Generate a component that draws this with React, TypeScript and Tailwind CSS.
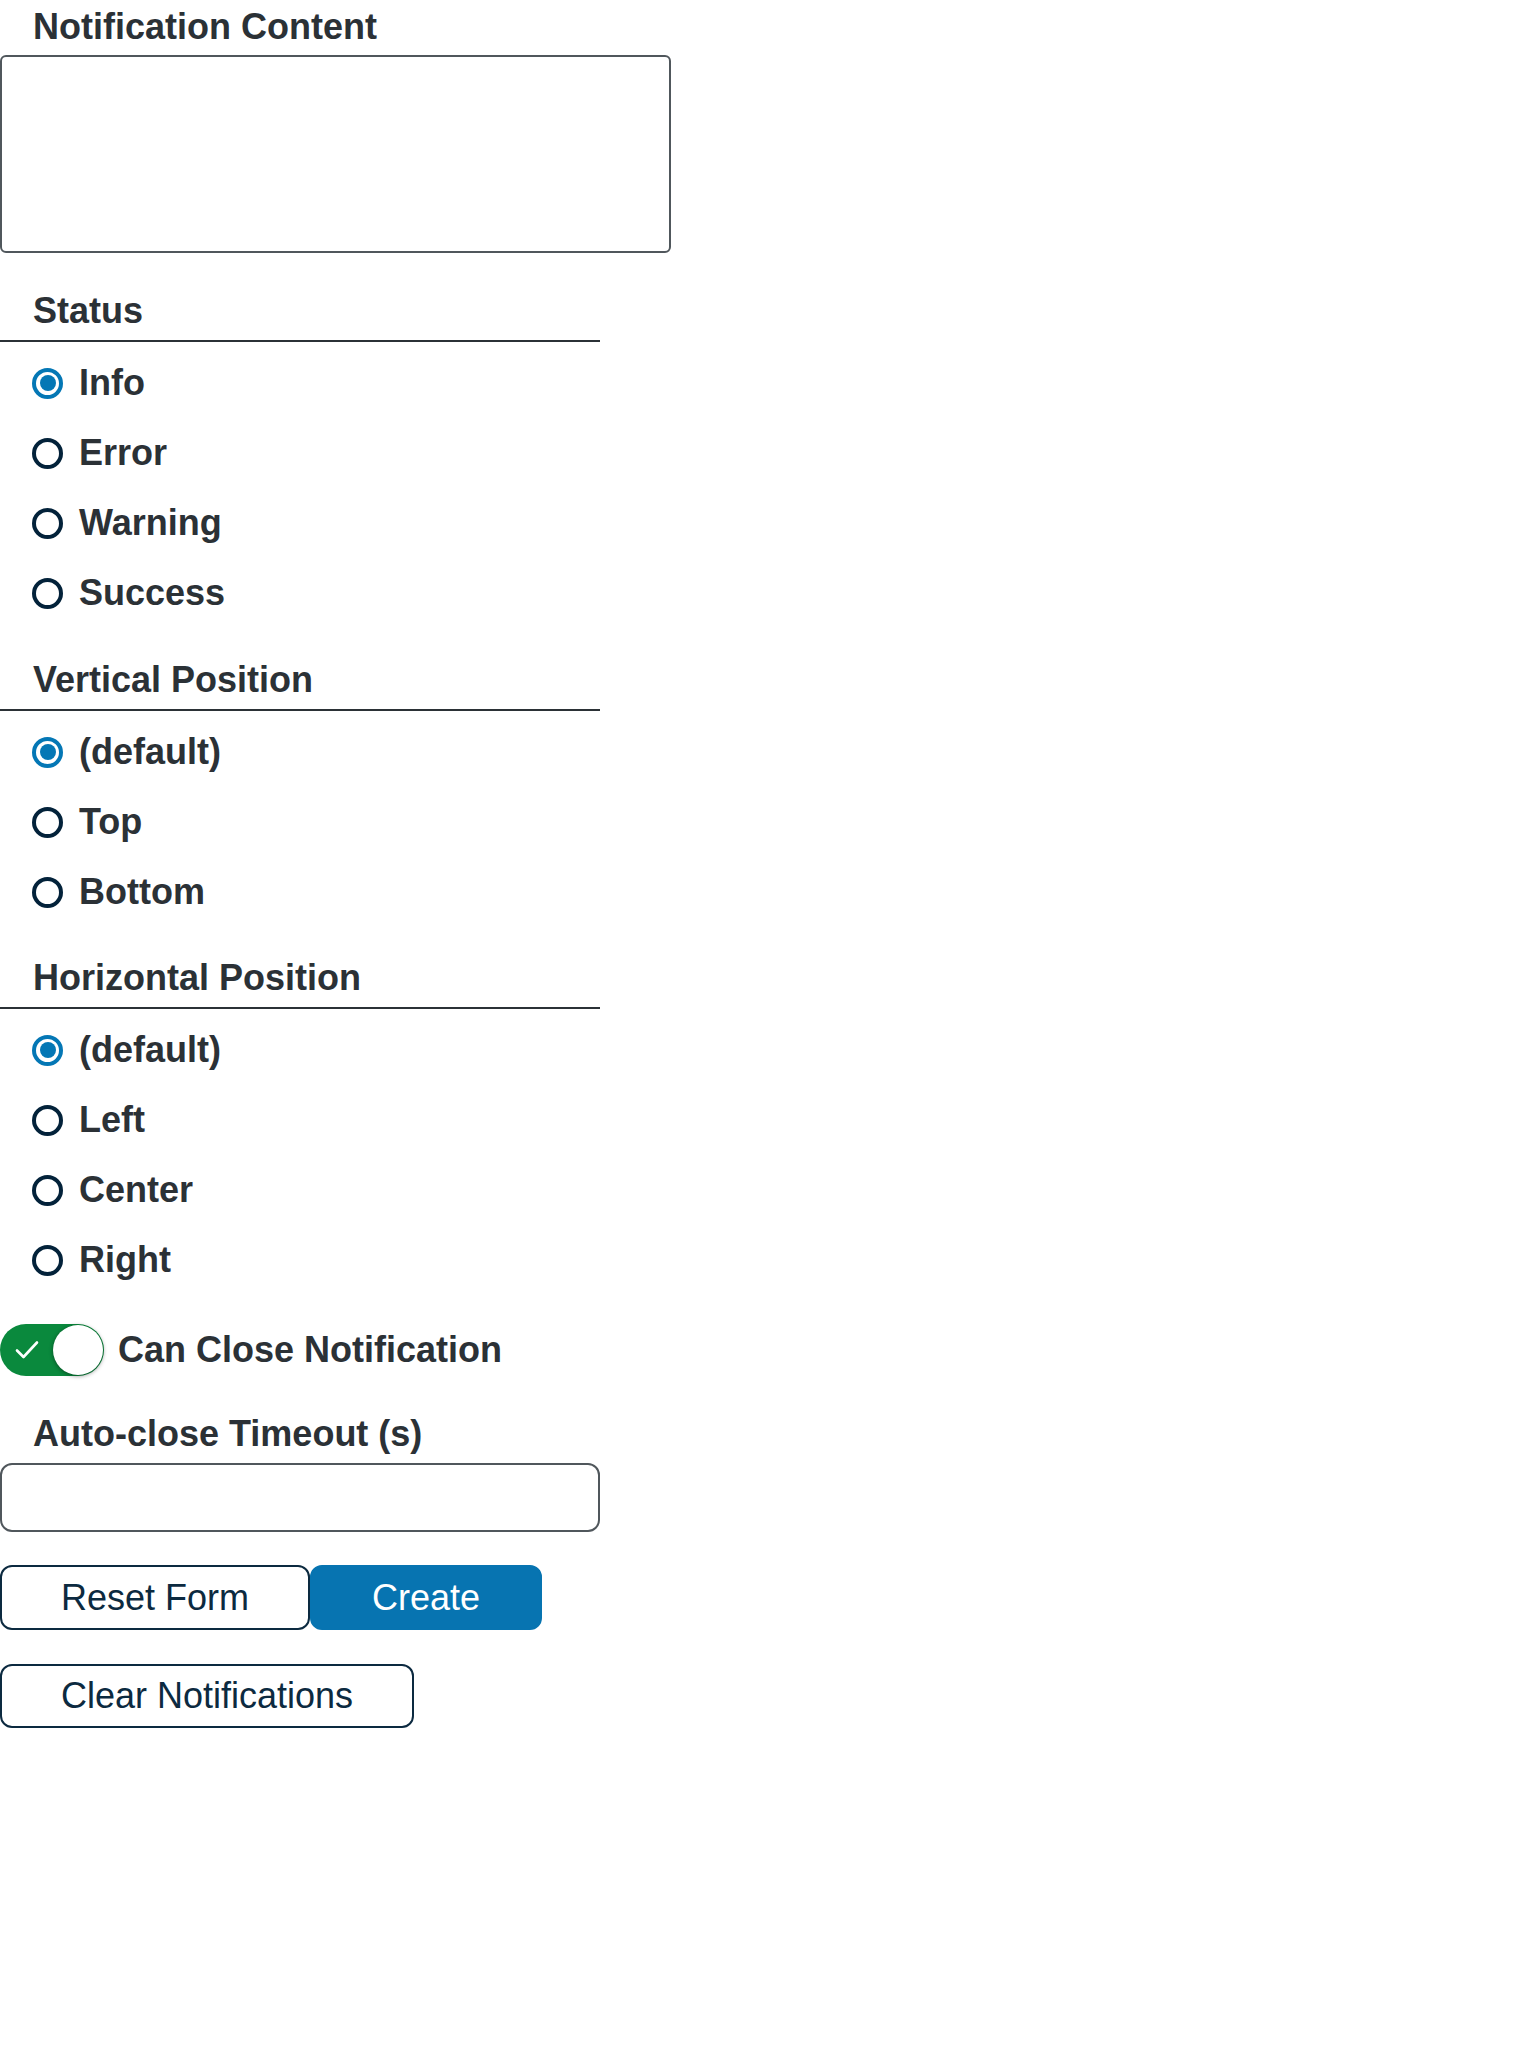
import React, { useState } from "react";

const font = { fontFamily: '"Liberation Sans", Arial, sans-serif' };

type Option = { value: string; label: string };

const statusOptions: Option[] = [
  { value: "info", label: "Info" },
  { value: "error", label: "Error" },
  { value: "warning", label: "Warning" },
  { value: "success", label: "Success" },
];

const verticalOptions: Option[] = [
  { value: "default", label: "(default)" },
  { value: "top", label: "Top" },
  { value: "bottom", label: "Bottom" },
];

const horizontalOptions: Option[] = [
  { value: "default", label: "(default)" },
  { value: "left", label: "Left" },
  { value: "center", label: "Center" },
  { value: "right", label: "Right" },
];

const RadioGroup: React.FC<{
  legend: string;
  options: Option[];
  value: string;
  onChange: (v: string) => void;
  className?: string;
}> = ({ legend, options, value, onChange, className }) => (
  <div className={className}>
    <div className="w-[600px] border-b-2 border-[#2b3136] pb-[9px] pl-[33px] text-[36px] leading-[40px] font-bold text-[#2b3136]">
      {legend}
    </div>
    <div className="mt-[6px] flex flex-col">
      {options.map((opt) => {
        const checked = opt.value === value;
        return (
          <label
            key={opt.value}
            className="flex h-[70px] cursor-pointer items-center gap-[16px] pl-[32px]"
            onClick={() => onChange(opt.value)}
          >
            <span
              className={
                checked
                  ? "flex h-[31px] w-[31px] items-center justify-center rounded-full border-4 border-[#0477b5]"
                  : "flex h-[31px] w-[31px] items-center justify-center rounded-full border-4 border-[#03223a]"
              }
            >
              {checked && <span className="h-[16px] w-[16px] rounded-full bg-[#0477b5]" />}
            </span>
            <span className="text-[36px] leading-[40px] font-bold text-[#2b3136]">{opt.label}</span>
          </label>
        );
      })}
    </div>
  </div>
);

export default function App() {
  const [status, setStatus] = useState("info");
  const [vertical, setVertical] = useState("default");
  const [horizontal, setHorizontal] = useState("default");
  const [canClose, setCanClose] = useState(true);

  return (
    <div className="min-h-[2048px] bg-white" style={font}>
      <div className="pt-[7px] pl-[33px] text-[36px] leading-[40px] font-bold text-[#2b3136]">
        Notification Content
      </div>
      <textarea className="mt-[8px] block h-[198px] w-[671px] resize-none rounded-[6px] border-2 border-[#50575c] bg-white" />

      <RadioGroup
        className="mt-[38px]"
        legend="Status"
        options={statusOptions}
        value={status}
        onChange={setStatus}
      />
      <RadioGroup
        className="mt-[32px]"
        legend="Vertical Position"
        options={verticalOptions}
        value={vertical}
        onChange={setVertical}
      />
      <RadioGroup
        className="mt-[31px]"
        legend="Horizontal Position"
        options={horizontalOptions}
        value={horizontal}
        onChange={setHorizontal}
      />

      <div className="mt-[29px] flex items-center gap-[14px]">
        <button
          className={
            canClose
              ? "relative h-[52px] w-[104px] rounded-full bg-[#0a893d]"
              : "relative h-[52px] w-[104px] rounded-full bg-[#8a9399]"
          }
          onClick={() => setCanClose(!canClose)}
        >
          <svg
            className="absolute top-[16px] left-[15px]"
            width="24"
            height="20"
            viewBox="0 0 24 20"
            fill="none"
          >
            <path d="M2 10.5 L8.5 17 L22 2.5" stroke="white" strokeWidth="2.6" strokeLinecap="round" strokeLinejoin="round" />
          </svg>
          <span className="absolute top-[1px] right-[1px] h-[50px] w-[50px] rounded-full bg-white shadow-[0_1px_4px_rgba(0,0,0,0.45)]" />
        </button>
        <span className="text-[36px] leading-[40px] font-bold text-[#2b3136]">Can Close Notification</span>
      </div>

      <div className="mt-[38px] pl-[33px] text-[36px] leading-[40px] font-bold text-[#2b3136]">
        Auto-close Timeout (s)
      </div>
      <input
        type="text"
        className="mt-[9px] block h-[69px] w-[600px] rounded-[12px] border-2 border-[#50575c] bg-white"
      />

      <div className="mt-[33px] flex">
        <button className="h-[65px] rounded-[12px] border-2 border-[#0c2a40] bg-white px-[59px] text-[36px] text-[#0c2a40]">
          Reset Form
        </button>
        <button className="h-[65px] rounded-[12px] border-2 border-[#0774b1] bg-[#0774b1] px-[60px] text-[36px] text-white">
          Create
        </button>
      </div>
      <div className="mt-[34px]">
        <button className="h-[64px] rounded-[12px] border-2 border-[#0c2a40] bg-white px-[59px] text-[36px] text-[#0c2a40]">
          Clear Notifications
        </button>
      </div>
    </div>
  );
}
